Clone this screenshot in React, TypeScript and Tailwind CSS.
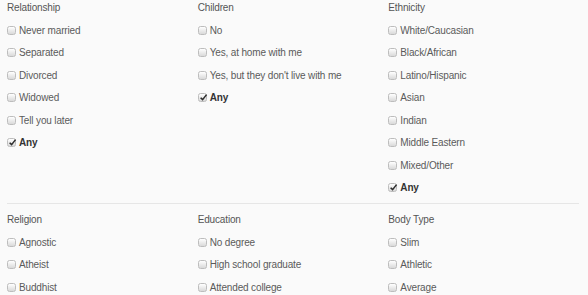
import React from 'react';

interface Group {
  title: string;
  options: string[];
}

const TOP: Group[] = [
  {
    title: 'Relationship',
    options: ['Never married', 'Separated', 'Divorced', 'Widowed', 'Tell you later'],
  },
  {
    title: 'Children',
    options: ['No', 'Yes, at home with me', "Yes, but they don't live with me"],
  },
  {
    title: 'Ethnicity',
    options: [
      'White/Caucasian',
      'Black/African',
      'Latino/Hispanic',
      'Asian',
      'Indian',
      'Middle Eastern',
      'Mixed/Other',
    ],
  },
];

const BOTTOM: Group[] = [
  { title: 'Religion', options: ['Agnostic', 'Atheist', 'Buddhist'] },
  { title: 'Education', options: ['No degree', 'High school graduate', 'Attended college'] },
  { title: 'Body Type', options: ['Slim', 'Athletic', 'Average'] },
];

function Box({ checked }: { checked?: boolean }) {
  return (
    <span className="relative flex h-[9px] w-[9px] shrink-0 items-center justify-center rounded-[2.5px] border border-[#bdbdbd] bg-gradient-to-b from-white to-[#d9d9d9]">
      {checked && (
        <svg viewBox="0 0 10 10" className="absolute -top-[1px] left-[0px] h-[9px] w-[9px]">
          <path d="M1.8 5.2 L4 7.4 L8.4 1.8" fill="none" stroke="#2e2e2e" strokeWidth="1.7" />
        </svg>
      )}
    </span>
  );
}

function Row({ label, checked, bold }: { label: string; checked?: boolean; bold?: boolean }) {
  return (
    <label className="flex h-[22.5px] items-center gap-[3px]">
      <Box checked={checked} />
      <span className={bold ? 'font-bold text-[#333]' : 'text-[#5a5a5a]'}>{label}</span>
    </label>
  );
}

function Column({ group, withAny }: { group: Group; withAny: boolean }) {
  return (
    <div className="flex flex-col">
      <div className="h-[19px] leading-[16px] text-[#555]">{group.title}</div>
      {group.options.map((o) => (
        <Row key={o} label={o} />
      ))}
      {withAny && <Row label="Any" checked bold />}
    </div>
  );
}

export default function App() {
  return (
    <div
      className="h-[295px] w-[588px] overflow-hidden bg-[#fafafa] pl-[7px] text-[10px] tracking-[-0.15px]"
      style={{ fontFamily: '"Liberation Sans", Arial, sans-serif' }}
    >
      <div className="grid w-[572px] grid-cols-3">
        {TOP.map((g) => (
          <Column key={g.title} group={g} withAny />
        ))}
      </div>
      <div className="mt-[4px] w-[572px] border-t border-[#e6e6e6]" />
      <div className="grid w-[572px] grid-cols-3 pt-[8px]">
        {BOTTOM.map((g) => (
          <Column key={g.title} group={g} withAny={false} />
        ))}
      </div>
    </div>
  );
}
